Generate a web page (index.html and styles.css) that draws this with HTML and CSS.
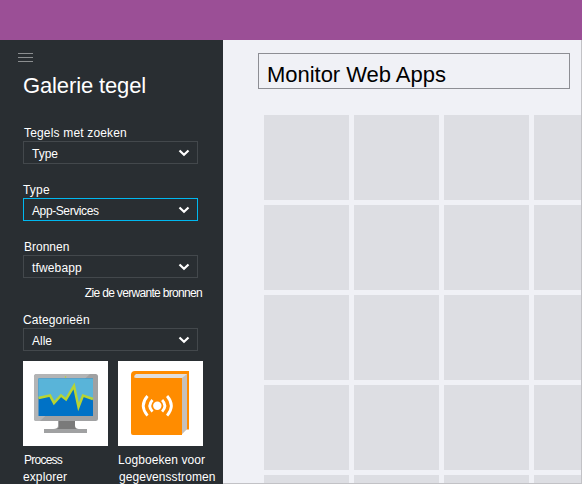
FILE: index.html
```html
<!DOCTYPE html>
<html lang="nl">
<head>
<meta charset="utf-8">
<title>Monitor Web Apps</title>
<link rel="stylesheet" href="styles.css">
</head>
<body>
<header class="topbar"></header>
<div class="layout">
  <aside class="sidebar">
    <div class="menu"><i></i><i></i><i></i></div>
    <h1 class="title">Galerie tegel</h1>
    <div class="field">
      <div class="label"><span class="t-search">Tegels met zoeken</span></div>
      <div class="select"><span class="t-type">Type</span><svg class="chevron" viewBox="0 0 12 8"><path d="M1.500 1.500 6 5.800 10.500 1.500"/></svg></div>
    </div>
    <div class="field">
      <div class="label"><span class="t-kind">Type</span></div>
      <div class="select active"><span class="t-app">App-Services</span><svg class="chevron" viewBox="0 0 12 8"><path d="M1.500 1.500 6 5.800 10.500 1.500"/></svg></div>
    </div>
    <div class="field resources">
      <div class="label"><span class="t-bron">Bronnen</span></div>
      <div class="select"><span class="t-tf">tfwebapp</span><svg class="chevron" viewBox="0 0 12 8"><path d="M1.500 1.500 6 5.800 10.500 1.500"/></svg></div>
      <div class="related">Zie de verwante bronnen</div>
    </div>
    <div class="field categories">
      <div class="label"><span class="t-cat">Categorieën</span></div>
      <div class="select"><span class="t-alle">Alle</span><svg class="chevron" viewBox="0 0 12 8"><path d="M1.500 1.500 6 5.800 10.500 1.500"/></svg></div>
    </div>
    <div class="gallery">
      <div class="item">
        <svg class="icon" viewBox="0 0 85 85">
          <rect width="85" height="85" fill="#fff"/>
          <path d="M35 58h17v7q0 3 4 3h8v4H21v-4h9q5 0 5-3z" fill="#a0a1a2"/>
          <path d="M36 59h16v6q0 3 3 3H32q4 0 4-3z" fill="#7a7a7a"/>
          <rect x="11" y="13" width="64" height="47" rx="2.500" fill="#a0a1a2"/>
          <path d="M13.500 13H67L17 60h-3.500Q11 60 11 57.500v-42Q11 13 13.500 13z" fill="#b3b4b5"/>
          <rect x="15.500" y="17.500" width="54.500" height="37.500" fill="#0072c6"/>
          <path d="M15.500 17.500H70V37.500L60 34.500 55.500 46 51 25 43 38.500 38 34.500 31 42 27 34.500 15.500 37z" fill="#59b4d9"/>
          <path d="M15.500 37 27 34.500 31 42 38 34.500 43 38.500 51 25 55.500 46 60 34.500 70 38" fill="none" stroke="#b8d432" stroke-width="2.500"/>
          <circle cx="42.500" cy="16" r=".8" fill="#b8d432"/>
        </svg>
        <div class="caption"><span class="t-proc">Process</span><br><span class="t-exp">explorer</span></div>
      </div>
      <div class="item">
        <svg class="icon" viewBox="0 0 85 85">
          <rect width="85" height="85" fill="#fff"/>
          <path d="M17 10H71V68.500H65L13 72V14Q13 10 17 10z" fill="#ff8c00"/>
          <path d="M18 13H69V68L64 73V17H16Q16 14 18 13z" fill="#e1dedc"/>
          <path d="M69 13V68L64 73V17z" fill="#c5c0bc"/>
          <path d="M13 14Q15 17 18 17H64V74H15Q13 74 13 72z" fill="#ff8c00"/>
          <circle cx="39.300" cy="44.800" r="4.200" fill="#fff"/>
          <g fill="none" stroke="#fff" stroke-width="2.800"><path d="M34.500 39q-5.500 5.800 0 11.600M44.100 39q5.500 5.800 0 11.600M29.500 35q-8.500 9.800 0 19.600M49.100 35q8.500 9.800 0 19.600"/></g>
        </svg>
        <div class="caption"><span class="t-log">Logboeken voor</span><br><span class="t-geg">gegevensstromen</span></div>
      </div>
    </div>
  </aside>
  <main class="main">
    <div class="name-box"><span>Monitor Web Apps</span></div>
    <div class="tiles">
      <i></i><i></i><i></i><i></i><i></i><i></i><i></i><i></i><i></i><i></i>
      <i></i><i></i><i></i><i></i><i></i><i></i><i></i><i></i><i></i><i></i>
    </div>
  </main>
</div>
</body>
</html>
```
FILE: styles.css
```css
* { box-sizing: border-box; }
body {
  margin: 0;
  height: 484px;
  overflow: hidden;
  background: #f0f1f6;
  font: 12px/16px "Liberation Sans", Arial, sans-serif;
}
.topbar { height: 40px; background: #9b4f96; }
.layout { display: flex; height: 444px; }
.sidebar {
  width: 223px;
  flex: none;
  padding: 13px 0 0 23px;
  background: #292e32;
  color: #fff;
  overflow: hidden;
}
.menu {
  display: grid;
  gap: 3px;
  width: 15px;
  margin-left: -5px;
}
.menu i { height: 1px; background: #8b8e90; }
.title {
  margin: 11px 0 0;
  font-size: 22px;
  font-weight: 400;
  line-height: 26px;
  letter-spacing: -.13px;
}
.field { height: 57px; white-space: nowrap; }
.title + .field { margin-top: 26px; }
.label { height: 16px; }
.select {
  display: flex;
  align-items: center;
  justify-content: space-between;
  width: 175px;
  height: 23px;
  padding: 2px 7px 0 8px;
  border: 1px solid #43484c;
}
.select.active { border-color: #00b8f0; }
.chevron {
  width: 12px;
  height: 8px;
  margin-top: -1px;
  fill: none;
  stroke: #fff;
  stroke-width: 2.2;
}
.t-search { padding-left: 1px; letter-spacing: .17px; }
.t-kind { letter-spacing: .2px; }
.t-bron { padding-left: 1px; }
.t-app { letter-spacing: -.4px; }
.t-tf { letter-spacing: .15px; }
.t-cat { letter-spacing: .12px; }
.t-proc { padding-left: 1px; letter-spacing: -.75px; }
.t-exp { letter-spacing: .1px; }
.t-log { letter-spacing: .07px; }
.t-geg { padding-left: 1px; letter-spacing: .07px; }
.field.resources { height: 73px; }
.related {
  width: 179px;
  margin-top: 7px;
  text-align: right;
  letter-spacing: -.69px;
  word-spacing: .1px;
}
.field.categories { height: 49px; }
.gallery { display: flex; gap: 10px; }
.item { width: 85px; white-space: nowrap; }
.icon { display: block; width: 85px; height: 85px; }
.caption { margin-top: 6px; line-height: 17px; }
.main {
  flex: 1;
  min-width: 0;
  padding: 13px 0 0 35px;
  border: solid #c2c2c6;
  border-width: 0 1px 1px 0;
  overflow: hidden;
}
.name-box {
  width: 312px;
  height: 36px;
  padding: 8px 0 0 8px;
  border: 1px solid #8d8e94;
  color: #000;
  font-size: 22px;
  line-height: 26px;
  letter-spacing: -.03px;
}
.tiles {
  display: grid;
  grid-template-columns: repeat(4, 85px);
  grid-auto-rows: 85px;
  gap: 5px;
  margin: 26px 0 0 6px;
}
.tiles i { background: #dddee3; }
```
